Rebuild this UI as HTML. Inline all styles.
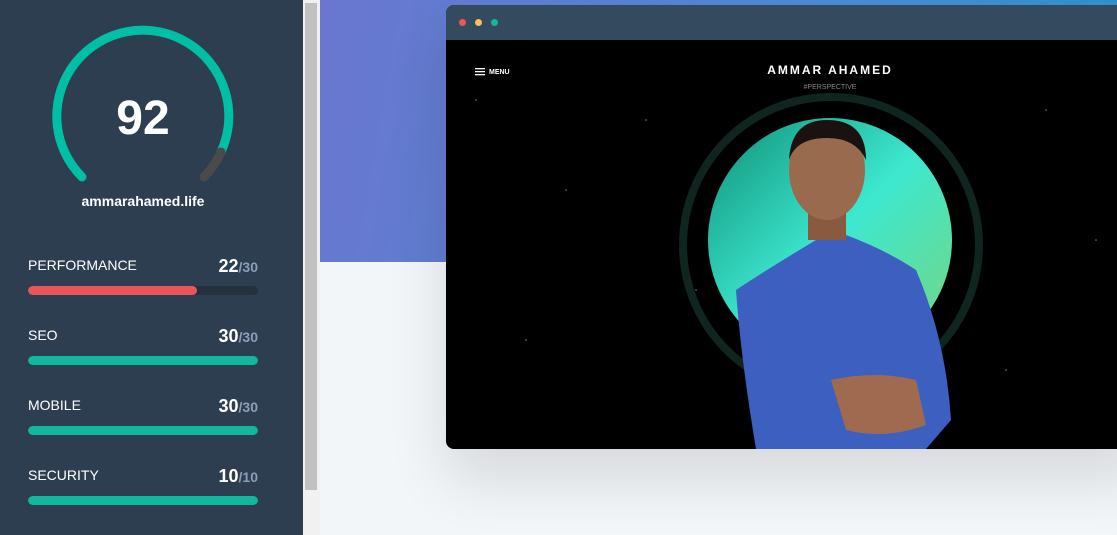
<!DOCTYPE html>
<html><head><meta charset="utf-8"><style>
*{margin:0;padding:0;box-sizing:border-box}
body{width:1117px;height:535px;overflow:hidden;position:relative;background:#f3f6f9;font-family:"Liberation Sans",sans-serif}
.side{position:absolute;left:0;top:0;width:303px;height:535px;background:#2d3e50;color:#fff}
.sb{position:absolute;left:303px;top:0;width:17px;height:535px;background:#f1f1f1}
.thumb{position:absolute;left:305px;top:3px;width:12px;height:487px;background:#c1c1c1}
.hero{position:absolute;left:320px;top:0;width:797px;height:262px;background:linear-gradient(100deg,#6a76cf 0%,#4d8bd4 60%,#2f92cc 100%)}
.lbl{position:absolute;left:28px;font-size:14px;color:#fff}
.sc{position:absolute;right:45px;font-size:18px;font-weight:bold;color:#fff}
.sc span{font-size:14px;color:#8aa0b8;font-weight:bold}
.bar{position:absolute;left:28px;width:230px;height:9px;border-radius:5px;background:#24303c;overflow:hidden}
.bar i{display:block;height:100%;background:#12b89d;border-radius:5px}
.win{position:absolute;left:446px;top:5px;width:700px;height:444px;border-radius:8px;background:#000;overflow:hidden;box-shadow:0 30px 60px rgba(0,0,0,.12)}
.tb{height:35px;background:#344a5f;position:relative}
.d{position:absolute;top:14px;width:7px;height:7px;border-radius:50%}
</style></head><body>
<div class="hero"></div>
<div class="side">
<svg width="303" height="230" style="position:absolute;left:0;top:0">
<path d="M82 177 A86 86 0 1 1 221 152" fill="none" stroke="#00bfa5" stroke-width="9" stroke-linecap="round"/>
<path d="M221 152 A86 86 0 0 1 204 177" fill="none" stroke="#4a4a4a" stroke-width="9" stroke-linecap="round"/>
<text x="143" y="134" text-anchor="middle" font-family="Liberation Sans" font-weight="bold" font-size="48" fill="#fff">92</text>
<text x="143" y="206" text-anchor="middle" font-family="Liberation Sans" font-weight="bold" font-size="14" fill="#fff">ammarahamed.life</text>
</svg>
<div class="lbl" style="top:257px">PERFORMANCE</div><div class="sc" style="top:256px">22<span>/30</span></div>
<div class="bar" style="top:286px"><i style="width:169px;background:#ea545c"></i></div>
<div class="lbl" style="top:327px">SEO</div><div class="sc" style="top:326px">30<span>/30</span></div>
<div class="bar" style="top:356px"><i style="width:100%"></i></div>
<div class="lbl" style="top:397px">MOBILE</div><div class="sc" style="top:396px">30<span>/30</span></div>
<div class="bar" style="top:426px"><i style="width:100%"></i></div>
<div class="lbl" style="top:467px">SECURITY</div><div class="sc" style="top:466px">10<span>/10</span></div>
<div class="bar" style="top:496px"><i style="width:100%"></i></div>
</div>
<div class="sb"></div><div class="thumb"></div>
<div class="win">
<div class="tb"><div class="d" style="left:13px;background:#f2545b"></div><div class="d" style="left:29px;background:#f7c25c"></div><div class="d" style="left:45px;background:#12b89d"></div></div>
<svg width="700" height="409" style="position:absolute;left:0;top:35px">
<defs><linearGradient id="g" x1="0" y1="0" x2="1" y2="1"><stop offset="0" stop-color="#0f8f78"/><stop offset=".5" stop-color="#3de8cf"/><stop offset="1" stop-color="#7ad47a"/></linearGradient></defs>
<g fill="#fff" opacity=".5"><circle cx="30" cy="60" r=".8"/><circle cx="120" cy="150" r=".8"/><circle cx="200" cy="80" r=".8"/><circle cx="600" cy="70" r=".8"/><circle cx="650" cy="200" r=".8"/><circle cx="560" cy="330" r=".8"/><circle cx="80" cy="300" r=".8"/><circle cx="250" cy="250" r=".8"/></g>
<rect x="29" y="28" width="10" height="1.3" fill="#fff"/><rect x="29" y="31" width="10" height="1.3" fill="#fff"/><rect x="29" y="34" width="10" height="1.3" fill="#fff"/>
<text x="43" y="34" font-family="Liberation Sans" font-weight="bold" font-size="7" fill="#fff">MENU</text>
<text x="384" y="34" text-anchor="middle" font-family="Liberation Sans" font-weight="bold" font-size="12" letter-spacing="2" fill="#fff">AMMAR AHAMED</text>
<text x="384" y="49" text-anchor="middle" font-family="Liberation Sans" font-size="7" fill="#888">#PERSPECTIVE</text>
<circle cx="385" cy="205" r="148" fill="none" stroke="#0f2520" stroke-width="8"/>
<circle cx="384" cy="200" r="122" fill="url(#g)"/>
<path d="M290 250 Q320 230 370 200 L400 195 Q440 210 470 230 Q500 300 505 380 L480 409 L310 409 Q295 320 290 250Z" fill="#3c5fc0"/>
<path d="M385 340 Q430 330 470 340 L480 385 Q440 400 400 390Z" fill="#a06a50"/>
<rect x="362" y="160" width="38" height="40" fill="#8a5a40"/>
<ellipse cx="381" cy="130" rx="38" ry="50" fill="#9a6a4e"/>
<path d="M343 120 Q345 80 381 80 Q420 80 420 120 Q410 98 381 98 Q350 98 343 120Z" fill="#1a1210"/>
</svg>
</div>
</body></html>
